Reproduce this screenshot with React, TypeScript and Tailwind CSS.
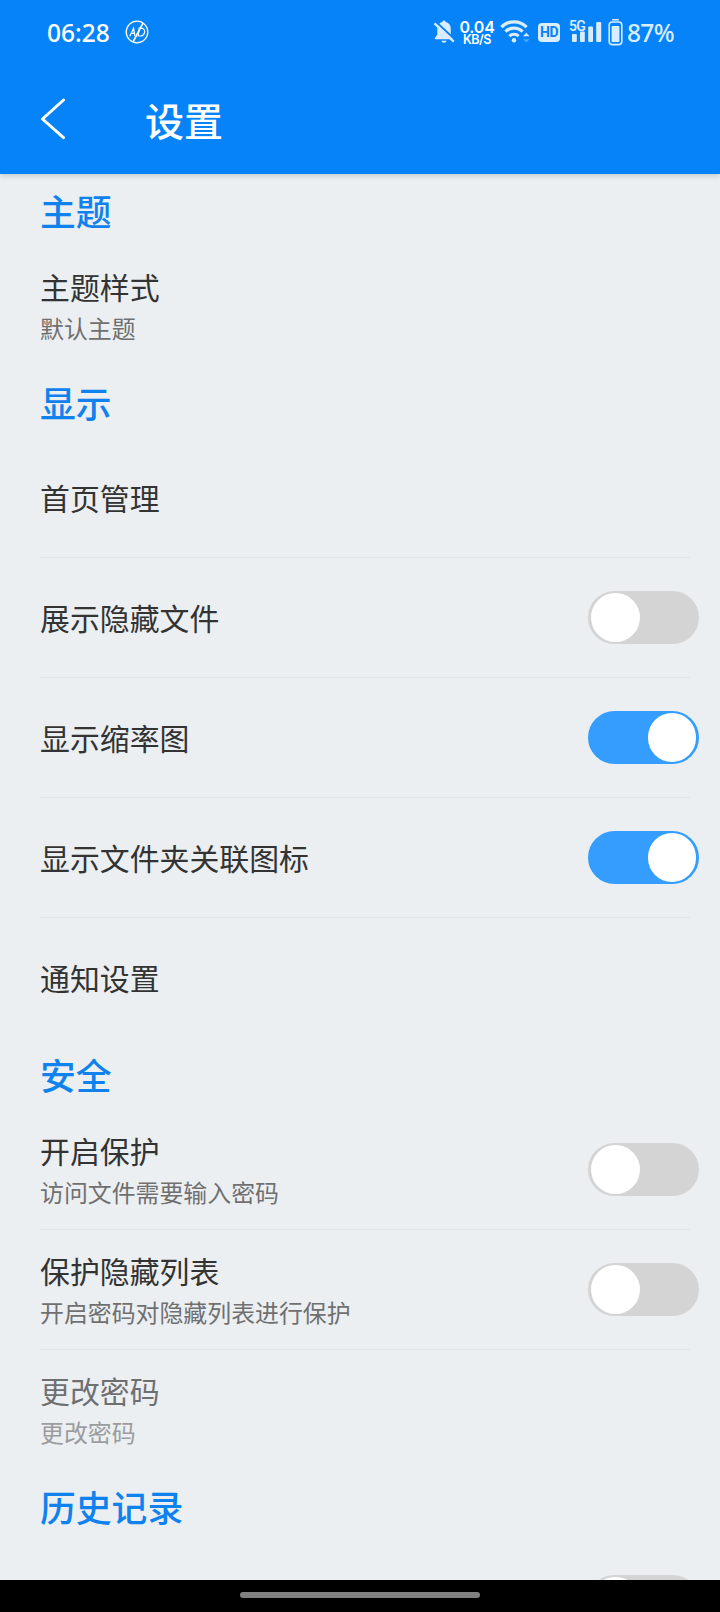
import clsx from "clsx";
import { useState } from "react";

type Item = {
  title: string;
  summary?: string;
  toggle?: boolean;
  on?: boolean;
  disabled?: boolean;
};

type Section = {
  name: string;
  items: Item[];
};

const sections: Section[] = [
  {
    name: "主题",
    items: [{ title: "主题样式", summary: "默认主题" }],
  },
  {
    name: "显示",
    items: [
      { title: "首页管理" },
      { title: "展示隐藏文件", toggle: true },
      { title: "显示缩率图", toggle: true, on: true },
      { title: "显示文件夹关联图标", toggle: true, on: true },
      { title: "通知设置" },
    ],
  },
  {
    name: "安全",
    items: [
      { title: "开启保护", summary: "访问文件需要输入密码", toggle: true },
      { title: "保护隐藏列表", summary: "开启密码对隐藏列表进行保护", toggle: true },
      { title: "更改密码", summary: "更改密码", disabled: true },
    ],
  },
  {
    name: "历史记录",
    items: [{ title: "", toggle: true }],
  },
];

const AdBlockIcon = () => (
  <svg width="24" height="24" viewBox="0 0 24 24" fill="none" stroke="#fff" className="ml-[16px] shrink-0">
    <circle cx="12" cy="12" r="10.8" strokeWidth="1.3" />
    <path d="M8.4 21.2 18 3.2" strokeWidth="1.7" />
    <path d="M4.8 16.2 8.6 8.2 9.8 15.8M6.2 13.4h3.4" strokeWidth="1.2" />
    <path d="M14.2 8.2h1.6c3.6 0 4.4 2.6 3.6 4.8-.7 2-2.2 3-4 3h-2.2z" strokeWidth="1.2" />
  </svg>
);

const MutedBellIcon = () => (
  <svg width="22" height="26" viewBox="0 0 22 26" className="shrink-0">
    <path
      d="M11 1.5c1 0 1.5.7 1.6 1.5 3.2.7 5.2 3.3 5.2 6.7v6l2.6 3.4v1.2H1.8v-1.2l2.5-3.4v-6c0-3.4 2-6 5.1-6.7.1-.8.6-1.5 1.6-1.5z"
      fill="#d9edff"
    />
    <path d="M8.3 21.8h5.4c-.4 1.3-1.3 2-2.7 2s-2.3-.7-2.7-2z" fill="#d9edff" />
    <path d="M2.6 2.4 22 20.6" stroke="#0683f8" strokeWidth="2" />
    <path d="M1.5 4.4 20.8 22.6" stroke="#d9edff" strokeWidth="2.2" />
  </svg>
);

const WifiIcon = () => (
  <svg width="30" height="26" viewBox="0 0 30 26" fill="none" className="ml-[6px] shrink-0">
    <g stroke="#d9edff" strokeWidth="3.2">
      <path d="M1.4 8.2a17.4 17.4 0 0 1 25.2 0" />
      <path d="M5.4 12.7a12 12 0 0 1 17.2 0" />
      <path d="M9.4 17.1a6.6 6.6 0 0 1 9.2 0" />
    </g>
    <circle cx="14" cy="21.2" r="2.2" fill="#d9edff" />
    <path d="M23 17.2 26.3 13.8 29.6 17.2z" fill="#d9edff" />
    <path d="M23 20.2h6.6l-3.3 3.3z" fill="#4ba7fb" />
  </svg>
);

const SignalIcon = () => (
  <div className="relative ml-[10px] h-[26px] w-[32px] shrink-0">
    <span className="absolute top-0 left-[-1px] font-['Roboto',sans-serif] text-[14px] leading-[14px] font-semibold tracking-[-0.8px] text-[#d9edff]">
      5G
    </span>
    <svg width="32" height="26" viewBox="0 0 32 26" fill="#d9edff">
      <rect x="2" y="15" width="4.8" height="8" rx="1" />
      <rect x="10" y="12.5" width="4.8" height="10.5" rx="1" />
      <rect x="18.2" y="7.5" width="4.8" height="15.5" rx="1" />
      <rect x="26.2" y="3" width="5" height="20" rx="1" />
    </svg>
  </div>
);

const BatteryIcon = () => (
  <svg width="15" height="28" viewBox="0 0 15 28" fill="none" className="ml-[6px] shrink-0">
    <rect x="4" y="1" width="7" height="1.6" rx=".6" fill="#d9edff" />
    <rect x="1.2" y="4" width="12.6" height="22.6" rx="3" stroke="#d9edff" strokeWidth="1.6" />
    <rect x="3.6" y="8" width="7.8" height="16" rx="1" fill="#d9edff" />
  </svg>
);

const StatusBar = () => (
  <div className="flex h-[64px] items-center pr-[45px] pl-[47px] text-white">
    <span className="w-[62px] pt-px font-['Noto_Sans',sans-serif] text-[24.5px] leading-[30px] font-medium">06:28</span>
    <AdBlockIcon />
    <div className="ml-auto flex items-center">
      <MutedBellIcon />
      <div className="ml-[5px] flex w-[34px] flex-col items-center pt-px font-['Inter',sans-serif] font-semibold">
        <span className="text-[16px] leading-[14px] tracking-[-0.2px]">0.04</span>
        <span className="text-[12.5px] leading-[12px] tracking-[-0.5px]">KB/S</span>
      </div>
      <WifiIcon />
      <span className="ml-[8px] flex h-[19px] w-[22px] items-center justify-center rounded-[4px] bg-[#d9edff] font-['Roboto',sans-serif] text-[14px] leading-[19px] font-bold tracking-[-0.5px] text-[#0683f8]">
        HD
      </span>
      <SignalIcon />
      <BatteryIcon />
      <span className="ml-[4px] w-[48px] pt-[2px] font-['Noto_Sans',sans-serif] text-[24.5px] leading-[30px] font-medium tracking-[-0.7px] text-[#d9edff]">
        87%
      </span>
    </div>
  </div>
);

const AppBar = () => (
  <div className="flex h-[110px] items-center pl-[40px]">
    <button aria-label="返回">
      <svg width="26" height="42" viewBox="0 0 26 42" fill="none" stroke="#fff" strokeWidth="3" strokeLinecap="round">
        <path d="M23.5 2 2.5 21 23.5 39.6" strokeLinejoin="round" />
      </svg>
    </button>
    <h1 className="ml-[79px] text-[39px] leading-[56px] font-medium text-white">设置</h1>
  </div>
);

const Toggle = ({ initial = false }: { initial?: boolean }) => {
  const [on, setOn] = useState(initial);

  return (
    <button
      role="switch"
      aria-checked={on}
      onClick={() => setOn(!on)}
      className={clsx(
        "mb-px flex h-[53px] w-[111px] shrink-0 items-center rounded-full px-[3px]",
        on ? "justify-end bg-[#349dfd]" : "justify-start bg-[#d4d4d4]",
      )}
    >
      <span className="size-[48.5px] rounded-full bg-white" />
    </button>
  );
};

const Row = ({ item, last }: { item: Item; last: boolean }) => (
  <div className="relative flex h-[120px] shrink-0 items-center justify-between pr-[21px] pl-[40px]">
    <div className={clsx("flex flex-col", item.summary ? "pt-[2px]" : "pb-[3px]", item.disabled && "opacity-70")}>
      <span className={clsx("text-[29.9px] leading-[42px]", item.disabled ? "text-[#3a3a3a]" : "text-[#333]")}>
        {item.title}
      </span>
      {item.summary && (
        <span className={clsx("text-[23.9px] leading-[42px]", item.disabled ? "text-[#7a7a7a]" : "text-[#707070]")}>
          {item.summary}
        </span>
      )}
    </div>
    {item.toggle && <Toggle initial={item.on} />}
    {!last && <div className="absolute right-[30px] bottom-0 left-[40px] h-px bg-[#e2e4e6]" />}
  </div>
);

const App = () => {
  return (
    <div className="flex h-[1612px] w-[720px] flex-col overflow-hidden bg-[#ebeff2] font-['Noto_Sans_CJK_SC',sans-serif]">
      <header className="z-10 h-[174px] shrink-0 bg-[#0683f8] shadow-[0_1px_6px_rgba(0,0,0,0.2)]">
        <StatusBar />
        <AppBar />
      </header>

      <main className="flex min-h-0 flex-1 flex-col overflow-hidden">
        {sections.map((section) => (
          <section key={section.name} className="shrink-0">
            <h2 className="flex h-[72px] items-center pl-[40px] text-[35.8px] leading-[50px] font-medium text-[#0f82ee]">
              {section.name}
            </h2>
            {section.items.map((item, i) => (
              <Row key={i} item={item} last={i === section.items.length - 1} />
            ))}
          </section>
        ))}
      </main>

      {/* Gesture bar */}
      <footer className="flex h-[32px] shrink-0 justify-center bg-black pt-[12px]">
        <div className="h-[6px] w-[240px] rounded-full bg-[#808080]" />
      </footer>
    </div>
  );
};

export default App;
